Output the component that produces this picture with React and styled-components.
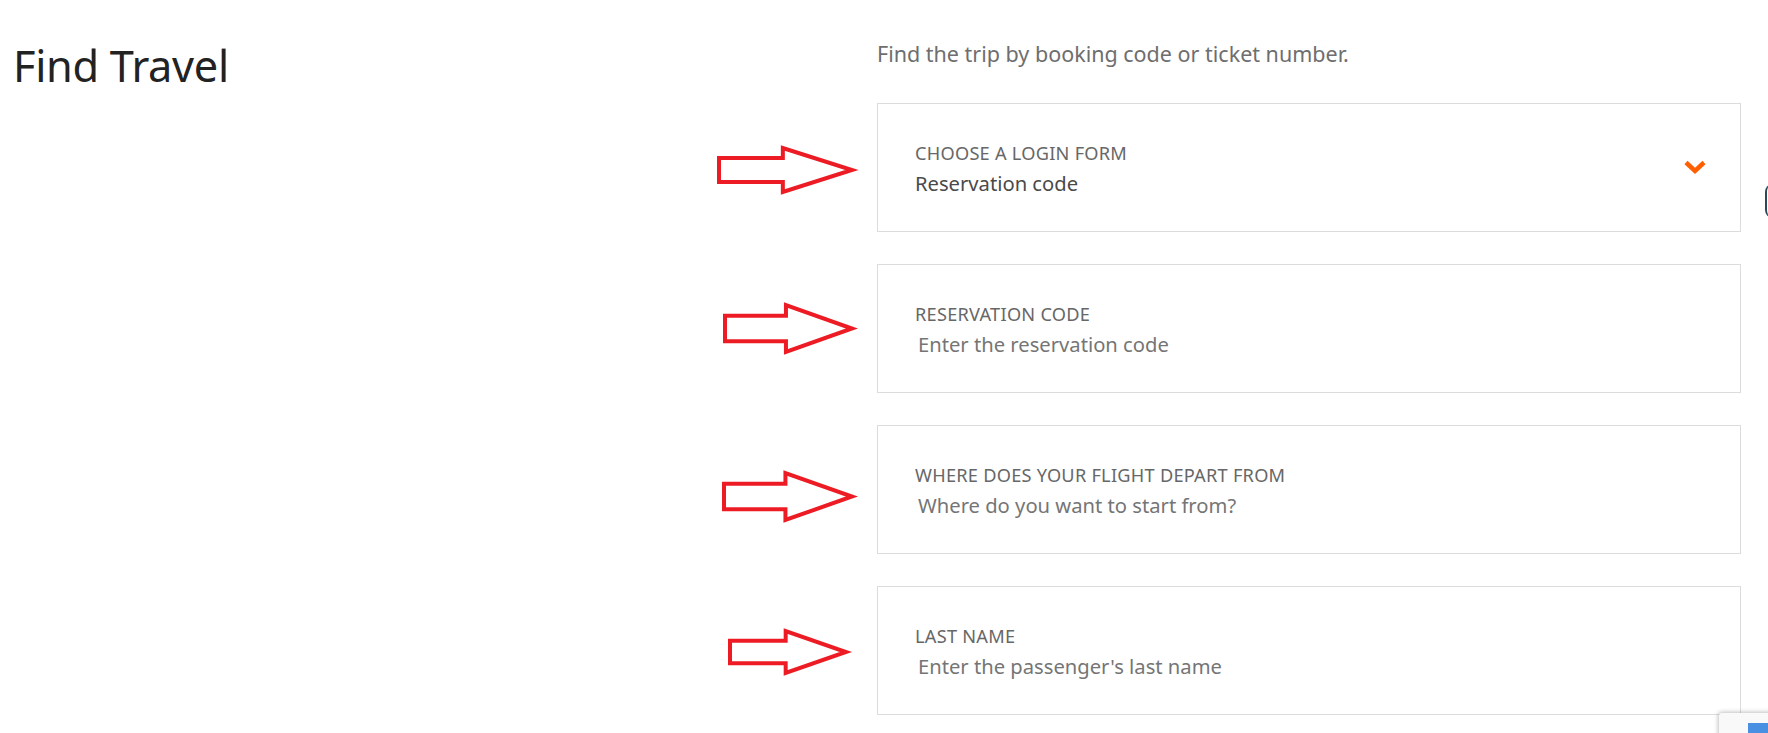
import React from "react";
import styled, { createGlobalStyle } from "styled-components";

const Global = createGlobalStyle`
  html, body { margin: 0; padding: 0; background: #ffffff; }
  body { font-family: "Noto Sans", "Open Sans", sans-serif; width: 1768px; height: 733px; overflow: hidden; }
  * { box-sizing: border-box; }
`;

const Page = styled.div`
  position: relative;
  display: flex;
  width: 1768px;
  height: 733px;
  padding-top: 34px;
  overflow: hidden;
`;

const TitleCol = styled.div`
  flex: none;
  width: 700px;
  padding-left: 13px;
`;

const Title = styled.h1`
  margin: 0;
  font-size: 43.3px;
  line-height: 64px;
  font-weight: 400;
  color: #222222;
  letter-spacing: -0.3px;
`;

const FormCol = styled.div`
  flex: none;
  width: 1041px;
  display: flex;
  flex-direction: column;
`;

const Subtitle = styled.p`
  margin: 0 0 0 177px;
  font-size: 21.5px;
  line-height: 40px;
  color: #6e6e6e;
  height: 69px;
`;

const Rows = styled.div`
  display: flex;
  flex-direction: column;
  gap: 32px;
`;

const Row = styled.div`
  display: flex;
  align-items: center;
`;

const ArrowSlot = styled.div`
  flex: none;
  width: 177px;
  display: flex;
  align-items: center;
`;

const ArrowSvg = styled.svg`
  display: block;
  overflow: visible;
  margin-left: ${(p) => p.$dx}px;
  margin-top: ${(p) => p.$dy * 2}px;
`;

const Card = styled.div`
  flex: none;
  width: 864px;
  height: 129px;
  border: 1px solid #dcdcdc;
  background: #fff;
  display: flex;
  align-items: center;
  justify-content: space-between;
  padding: 4px 33px 0 37px;
`;

const Field = styled.div`
  display: flex;
  flex-direction: column;
`;

const Label = styled.div`
  font-size: 18.2px;
  line-height: 24px;
  text-transform: uppercase;
  letter-spacing: 0.25px;
  color: #676767;
`;

const Value = styled.div`
  font-size: 20.2px;
  line-height: 30px;
  margin-top: 3px;
  margin-left: ${(p) => (p.$placeholder ? 3 : 0)}px;
  color: ${(p) => (p.$placeholder ? "#757575" : "#4a4a4a")};
`;

const ChevronSvg = styled.svg`
  display: block;
  margin-top: -6px;
`;

const Badge = styled.div`
  position: absolute;
  left: 1719px;
  top: 713px;
  width: 80px;
  height: 60px;
  background: #f9f9f9;
  border-radius: 3px;
  box-shadow: 0 0 4px 1px rgba(0, 0, 0, 0.25);
  padding: 10px 0 0 29px;
`;

const BadgeIcon = styled.div`
  width: 20px;
  height: 20px;
  background: #4a90e2;
`;

const SideTab = styled.div`
  position: absolute;
  left: 1765px;
  top: 184px;
  width: 8px;
  height: 34px;
  border-left: 2px solid #2a4a5a;
  border-radius: 8px 0 0 8px;
`;

function Arrow({ w, h, dx, dy }) {
  return (
    <ArrowSvg width={w - 4} height={h - 4} viewBox="0 0 100 100" preserveAspectRatio="none" $dx={dx + 2} $dy={dy}>
      <polygon
        points="0,23 48,23 48,0 100,50 48,100 48,77 0,77"
        fill="none"
        stroke="#ed1c24"
        strokeWidth="4"
        vectorEffect="non-scaling-stroke"
        strokeLinejoin="miter"
      />
    </ArrowSvg>
  );
}

function Chevron() {
  return (
    <ChevronSvg width="24" height="16" viewBox="0 0 24 16">
      <polyline points="3,3.5 12,12 21,3.5" fill="none" stroke="#ff5f00" strokeWidth="4.5" />
    </ChevronSvg>
  );
}

const fields = [
  { label: "Choose a login form", value: "Reservation code", select: true, arrow: { w: 137, h: 48, dx: 17, dy: 2 } },
  { label: "Reservation code", value: "Enter the reservation code", arrow: { w: 131, h: 51, dx: 23, dy: 0 } },
  { label: "Where does your flight depart from", value: "Where do you want to start from?", arrow: { w: 132, h: 51, dx: 22, dy: 7 } },
  { label: "Last name", value: "Enter the passenger's last name", arrow: { w: 120, h: 46, dx: 28, dy: 1 } },
];

export default function App() {
  return (
    <>
      <Global />
      <Page>
        <TitleCol>
          <Title>Find Travel</Title>
        </TitleCol>
        <FormCol>
          <Subtitle>Find the trip by booking code or ticket number.</Subtitle>
          <Rows>
            {fields.map((f) => (
              <Row key={f.label}>
                <ArrowSlot>
                  <Arrow {...f.arrow} />
                </ArrowSlot>
                <Card>
                  <Field>
                    <Label>{f.label}</Label>
                    <Value $placeholder={!f.select}>{f.value}</Value>
                  </Field>
                  {f.select && <Chevron />}
                </Card>
              </Row>
            ))}
          </Rows>
        </FormCol>
        <SideTab />
        <Badge>
          <BadgeIcon />
        </Badge>
      </Page>
    </>
  );
}
